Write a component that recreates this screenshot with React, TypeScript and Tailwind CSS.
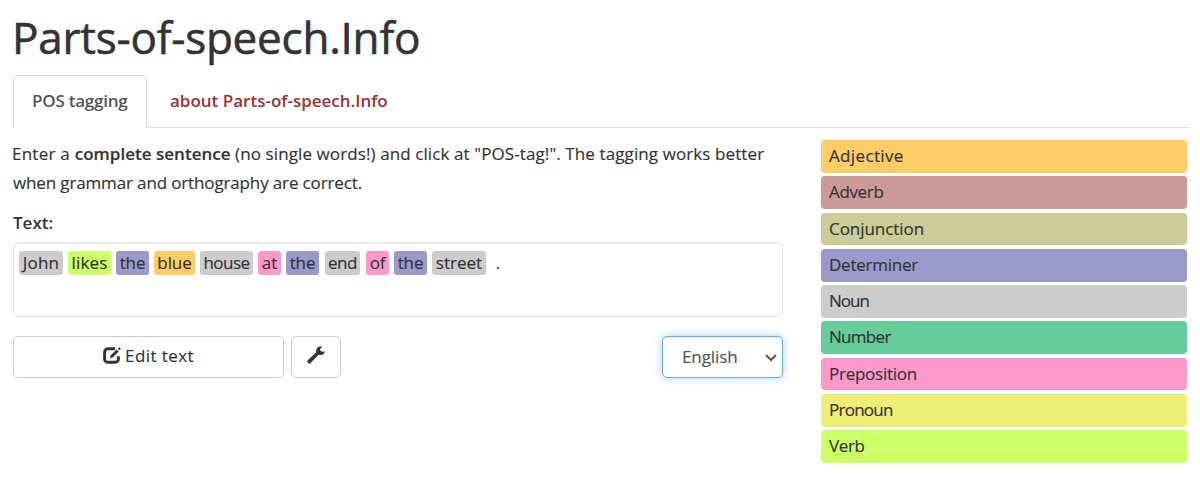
const legend = [
  { name: 'Adjective', style: 'bg-[#ffcc66] tracking-[0.35px]' },
  { name: 'Adverb', style: 'bg-[#cc9999] tracking-[-0.35px]' },
  { name: 'Conjunction', style: 'bg-[#cccc99] tracking-[-0.05px]' },
  { name: 'Determiner', style: 'bg-[#9999cc] tracking-[-0.25px]' },
  { name: 'Noun', style: 'bg-[#cccccc] tracking-[-1px]' },
  { name: 'Number', style: 'bg-[#66cc99] tracking-[-0.7px]' },
  { name: 'Preposition', style: 'bg-[#ff99cc] tracking-[-0.25px]' },
  { name: 'Pronoun', style: 'bg-[#eeee77] tracking-[-0.75px]' },
  { name: 'Verb', style: 'bg-[#ccff66] tracking-[-0.4px]' },
];

const words = [
  { text: 'John', style: 'w-11 mr-[5px] bg-[#cccccc] tracking-[0.2px]' },
  { text: 'likes', style: 'w-[43px] mr-[5px] bg-[#ccff66] tracking-[0.2px]' },
  { text: 'the', style: 'w-[33px] mr-[5px] bg-[#9999cc] tracking-[-0.1px]' },
  { text: 'blue', style: 'w-[41px] mr-[5px] bg-[#ffcc66] tracking-[-0.1px]' },
  { text: 'house', style: 'w-[53px] mr-[5px] bg-[#cccccc] tracking-[-0.5px]' },
  { text: 'at', style: 'w-[23px] mr-[5px] bg-[#ff99cc]' },
  { text: 'the', style: 'w-[33px] mr-[6px] bg-[#9999cc] tracking-[-0.1px]' },
  { text: 'end', style: 'w-[35px] mr-[6px] bg-[#cccccc] tracking-[-0.4px]' },
  { text: 'of', style: 'w-[23px] mr-[5px] bg-[#ff99cc] tracking-[-0.2px]' },
  { text: 'the', style: 'w-[33px] mr-[5px] bg-[#9999cc] tracking-[-0.1px]' },
  { text: 'street', style: 'w-[54px] mr-[5px] bg-[#cccccc]' },
  { text: '.', style: 'w-[14px]' },
];

function EditIcon() {
  return (
    <svg viewBox="0 0 18 17" className="h-[17px] w-[18px]" fill="none" stroke="currentColor">
      <path d="M12 1.8H5a3.400 3.400 0 0 0-3.400 3.400v7a3 3 0 0 0 3 3h7.800a3 3 0 0 0 3-3V9.200" strokeWidth="2.900" />
      <path d="M6.800 11.500l1.100-3.300 5.700-5.700 2.100 2.100-5.700 5.700z" fill="currentColor" stroke="none" />
      <path d="M14.900 1.800l1.200-1.300q.3-.3.6 0l1 1q.3.3 0 .6l-1.200 1.200z" fill="currentColor" stroke="none" />
    </svg>
  );
}

function WrenchIcon() {
  return (
    <svg viewBox="0 0 18 18" className="h-[18px] w-[18px]" fill="currentColor">
      <path d="M17.900 5.200c-.3 2.700-2.500 4.300-5 3.700l-1.300-.1-8.300 8.500c-.5.5-1.100.5-1.600 0L.5 16.100c-.5-.5-.5-1.100 0-1.600L9.300 6.300l-.2-1.400C9 2.100 11.400-.1 14.700.5l.6.3-2.300 2.300.6 1.900 2 .7z" />
    </svg>
  );
}

export default function App() {
  return (
    <div className="h-[480px] w-[1200px] bg-white pl-[13px] pr-3 font-['Open_Sans','Trebuchet_MS',sans-serif] text-[17px] leading-[29px] text-[#333333] [-webkit-text-stroke:0.15px_currentColor]">
      <h1 className="-ml-px h-[75px] pt-[7px] text-[44px] leading-[60px] tracking-[-0.22px] [-webkit-text-stroke:0.6px_currentColor]">
        Parts-of-speech.Info
      </h1>
      <nav className="flex h-[53px] border-b border-[#dddddd] font-semibold [-webkit-text-stroke:0]">
        <a className="-mb-px w-[134px] rounded-t-[5px] border border-b-0 border-[#dddddd] bg-white pl-[18px] pt-[10px] tracking-[-0.22px] text-[#555555]">
          POS tagging
        </a>
        <a className="pl-[23px] pt-[11px] text-[#993333]">about Parts-of-speech.Info</a>
      </nav>
      <div className="flex justify-between pr-px pt-3">
        <main className="-mt-px w-[770px]">
          <p className="whitespace-nowrap">
            <span className="-ml-px tracking-[0.25px]">Enter a </span>
            <span className="font-semibold tracking-[0.02px]">complete sentence</span>
            <span className="tracking-[0.1px]"> (no single words!) and click at "POS-tag!". The tagging works better</span>
            <br />
            <span className="tracking-[-0.14px]">when grammar and orthography are correct.</span>
          </p>
          <label className="mt-[11px] block h-[33px] font-semibold [-webkit-text-stroke:0]">Text:</label>
          <div className="mt-px flex h-[75px] items-start rounded-[5px] border border-[#e3e3e3] bg-white pl-[5px] pt-2 shadow-[inset_0_1px_1px_rgba(0,0,0,0.05)]">
            {words.map((word, i) => (
              <span key={i} className={'h-6 shrink-0 rounded-[3px] text-center leading-6 ' + word.style}>
                {word.text}
              </span>
            ))}
          </div>
          <div className="mt-[19px] flex h-[42px]">
            <button className="flex w-[271px] items-center justify-center gap-1 rounded-[5px] border border-[#cccccc] bg-white pb-[3px] tracking-[0.4px]">
              <EditIcon />
              Edit text
            </button>
            <button className="ml-[7px] flex w-[50px] items-center justify-center rounded-[5px] border border-[#cccccc] bg-white pb-1">
              <WrenchIcon />
            </button>
            <button className="ml-auto flex w-[121px] items-center justify-between rounded-[5px] border border-[#66afe9] bg-white pl-[19px] pr-[5px] tracking-[-0.1px] text-[#555555] shadow-[inset_0_1px_1px_rgba(0,0,0,0.075),0_0_8px_rgba(102,175,233,0.6)]">
              <span className="pb-0.5">English</span>
              <svg viewBox="0 0 12 8" className="mt-0.5 h-2 w-3" fill="none" stroke="currentColor" strokeWidth="2">
                <path d="M1 1l5 5 5-5" />
              </svg>
            </button>
          </div>
        </main>
        <aside className="flex w-[366px] flex-col gap-[3.5px]">
          {legend.map((item) => (
            <div key={item.name} className={'h-[32.75px] rounded pl-2 leading-[31.5px] ' + item.style}>
              {item.name}
            </div>
          ))}
        </aside>
      </div>
    </div>
  );
}
